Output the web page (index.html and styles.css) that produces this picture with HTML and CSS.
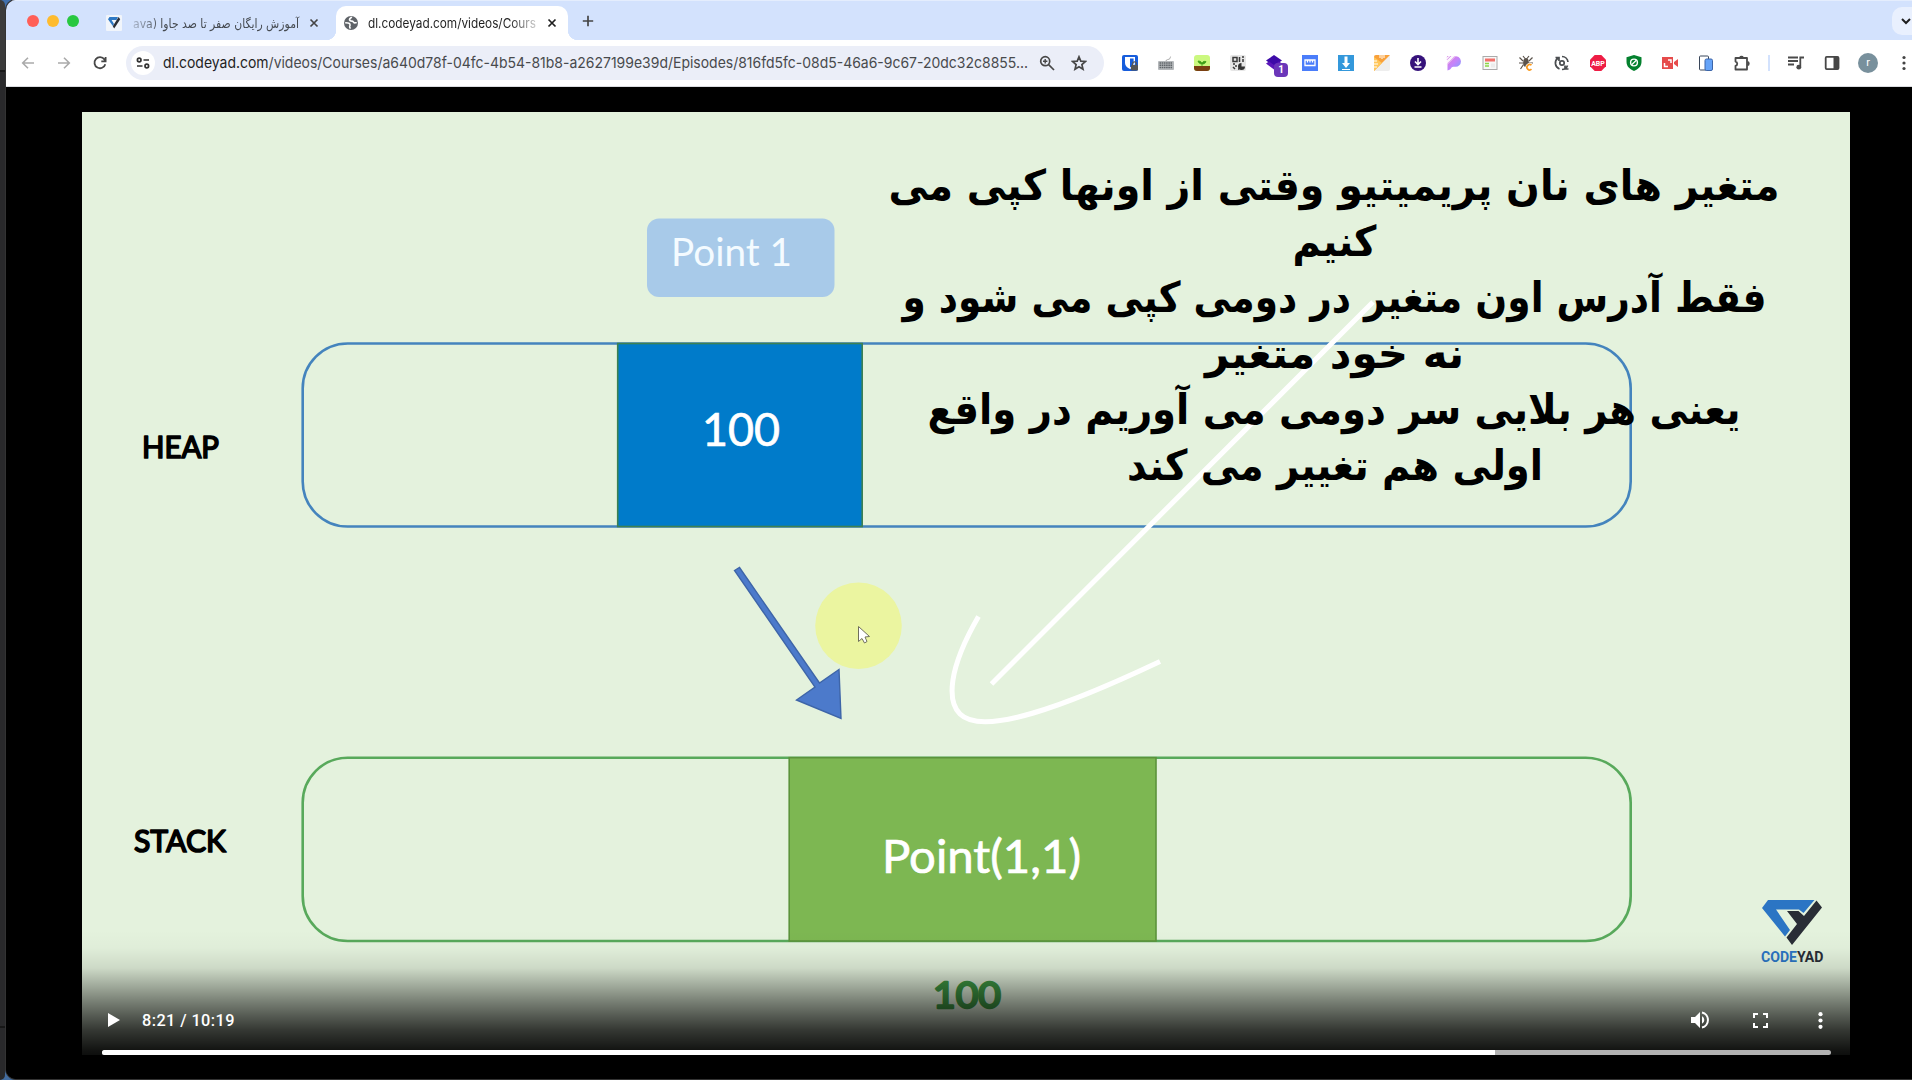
FILE: index.html
```html
<!DOCTYPE html>
<html lang="en">
<head>
<meta charset="utf-8">
<title>dl.codeyad.com</title>
<link rel="stylesheet" href="styles.css">
</head>
<body>
<div class="desktop">
  <div class="behind"></div>
  <div class="window">
    <header class="tabstrip">
      <div class="lights"><i class="red"></i><i class="yellow"></i><i class="green"></i></div>
      <div class="tab">
        <svg class="favicon" width="16" height="16" viewBox="0 0 16 16"><rect width="16" height="16" rx="1" fill="#f1f5fb"/><path d="M2 4.2 3.5 2H12L10.5 5H5.6L8 9 6.8 11Z" fill="#2d78c4"/><path d="M12.6 2 14.2 4.2 8.2 13.5 6.8 11.3Z" fill="#292d36"/></svg>
        <svg class="tab-title fade-left" width="168" height="24"><text class="fa" direction="rtl" x="167" y="16.500" textLength="166" lengthAdjust="spacingAndGlyphs">آموزش رایگان صفر تا صد جاوا (ava</text></svg>
        <svg class="close" width="10" height="10" viewBox="0 0 10 10"><path d="M1.5 1.5l7 7M8.5 1.5l-7 7"/></svg>
      </div>
      <div class="tab active">
        <svg class="globe" width="16" height="16" viewBox="0 0 16 16"><circle cx="8" cy="8" r="7" fill="#5f6368"/><path d="M8.6 1.8c-.4 1.4-1.9 1.5-2.1 2.6-.2 1.4 1.3 1.6 2.6 1.7 1.7.2 1.2 1.8 2.6 1.800.800 0 1.400-.2 2-.1M2.200 7.800c2 .1 4.400.1 4.800 1.500.4 1.100-.4 1.600-.3 2.600.1.700.5 1.100.6 1.800" fill="none" stroke="#fff" stroke-width="1.600"/></svg>
        <svg class="tab-title fade-right" width="170" height="24"><text x="1" y="16.500" textLength="168" lengthAdjust="spacingAndGlyphs">dl.codeyad.com/videos/Cours</text></svg>
        <svg class="close" width="10" height="10" viewBox="0 0 10 10"><path d="M1.5 1.5l7 7M8.5 1.5l-7 7"/></svg>
      </div>
      <svg class="plus" width="12" height="12" viewBox="0 0 12 12"><path d="M6 .8v10.4M.8 6h10.4"/></svg>
      <div class="tab-search"><svg width="10" height="8" viewBox="0 0 10 8"><path d="M1 2l4 4 4-4"/></svg></div>
    </header>
    <div class="toolbar">
      <div class="nav">
        <svg width="16" height="16" viewBox="0 0 16 16" class="dim"><path d="M14 8H3M8 2.7L2.7 8 8 13.3"/></svg>
        <svg width="16" height="16" viewBox="0 0 16 16" class="dim"><path d="M2 8h11M8 2.7L13.3 8 8 13.3"/></svg>
        <svg width="16" height="16" viewBox="0 0 16 16"><path d="M13.3 9.2A5.5 5.5 0 1 1 12.4 4.4L13.4 6M13.6 2v4.3H9.3"/></svg>
      </div>
      <div class="omnibox">
        <span class="site"><svg width="14" height="14" viewBox="0 0 14 14"><circle cx="3.2" cy="4" r="1.8"/><path d="M7.5 4H13M1 10h5.5"/><circle cx="10.8" cy="10" r="1.8"/></svg></span>
        <svg class="url" width="868" height="26"><text x="0" y="18" textLength="865" lengthAdjust="spacingAndGlyphs"><tspan class="host">dl.codeyad.com</tspan>/videos/Courses/a640d78f-04fc-4b54-81b8-a2627199e39d/Episodes/816fd5fc-08d5-46a6-9c67-20dc32c8855...</text></svg>
        <svg class="mag" width="16" height="16" viewBox="0 0 16 16"><circle cx="6.2" cy="6.2" r="4.5"/><path d="M9.6 9.6L15 15"/><path d="M6.2 4v4.4M4 6.2h4.4" stroke-width="1.4"/></svg>
        <svg class="star" width="16" height="16" viewBox="0 0 16 16"><path d="M8 1.8l1.8 4.3 4.7.4-3.6 3.1 1.1 4.6L8 11.7l-4 2.5 1.1-4.6L1.5 6.500l4.700-.4z"/></svg>
      </div>
      <div class="extensions">
        <svg viewBox="0 0 16 16"><rect width="16" height="16" rx="2" fill="#175ddc"/><path d="M3 2h10v6c0 3-2.500 4.800-5 6-2.500-1.200-5-3-5-6z" fill="#fff"/><path d="M8 3.500h3.600V8c0 2-1.600 3.400-3.600 4.400z" fill="#175ddc"/><rect x="9" y="10" width="7" height="5.500" rx=".8" fill="#555"/><path d="M10.500 10V8.800a2 2 0 0 1 4 0V10" fill="none" stroke="#555" stroke-width="1.200"/></svg>
        <svg viewBox="0 0 16 16"><path d="M8 6c0-2 3-1 4-2.500C12.500 2.500 12 2 13 1.500" fill="none" stroke="#aaa"/><rect y="6" width="16" height="9" rx="1" fill="#b5b8bb"/><path d="M1.500 8h13M1.500 10.200h13M1.500 12.600h13" stroke="#60656a" stroke-width="1.500" stroke-dasharray="1.600 .6"/></svg>
        <svg viewBox="0 0 16 16"><rect width="16" height="16" rx="3" fill="#cbf87f"/><path d="M0 11h16v2a3 3 0 0 1-3 3H3a3 3 0 0 1-3-3z" fill="#7a3f12"/><path d="M8 11V8.500M8 9C6 9 4.500 8 4 6c2.500 0 4 1 4 3 0-2 1.500-3 4-2.500-.5 2-2 2.500-4 2.500" fill="#3d9d16" stroke="#3d9d16" stroke-width=".8"/></svg>
        <svg viewBox="0 0 16 16"><rect width="16" height="16" rx="2" fill="#e6e6e6"/><path d="M3 2.500h4v4H3zM9.500 2v5M12 2h2M13 4v3M3 9h2M6 10v2M3 12l2 2M8 14h1" fill="none" stroke="#383838" stroke-width="1.500"/><path d="M11.500 8v3.500H15A3.500 3.500 0 1 1 11.500 8" fill="#333"/></svg>
        <span class="ext-badge"><svg viewBox="0 0 16 16"><path d="M8 0l8 5.500-8 5.500L0 5.500z" fill="#3d0ba8"/><path d="M0 8.500L3 6.500 8 10l5-3.500 3 2-8 6z" fill="#5a17ba"/></svg><b>1</b></span>
        <svg viewBox="0 0 16 16"><rect width="16" height="16" fill="#4a7dfa"/><path d="M3 5h10v5.500H3zM5.500 5v2.500M8 5v2.500M10.500 5v2.500" fill="none" stroke="#fff" stroke-width="1.300"/></svg>
        <svg viewBox="0 0 16 16"><rect width="16" height="16" fill="#3498db"/><path d="M6.500 1.500h3V8H12l-4 5-4-5h2.500zM4 14h8v1H4z" fill="#fff"/></svg>
        <svg viewBox="0 0 16 16"><rect width="16" height="16" rx="2" fill="#eee"/><path d="M0 2a2 2 0 0 1 2-2h14L0 16z" fill="#f9a13a"/><path d="M0 2l8 6-8 8z" fill="#ffc75b"/><path d="M6 0v3M8 0v4M10 0v3M0 6h3M0 9h4M0 12h3" stroke="#fff"/></svg>
        <svg viewBox="0 0 16 16"><circle cx="8" cy="8" r="8" fill="#36127b"/><path d="M8 3v6M5 6.500L8 9.500l3-3M4.500 12h7" fill="none" stroke="#fff" stroke-width="1.600"/></svg>
        <svg viewBox="0 0 16 16"><defs><linearGradient id="pg" x2="1" y2="1"><stop stop-color="#e57bd5"/><stop offset=".5" stop-color="#c284fb"/><stop offset="1" stop-color="#73a4fb"/></linearGradient></defs><path d="M1.500 8L8 1.500a5.300 5.300 0 1 1 1 10.300H7.500c-2 0-2 1.200-3.500 2.700L1.500 15.500z" fill="url(#pg)"/><path d="M1 3.500L3.500 1M1 6.500L6.500 1M1 9.500L9 1.500" stroke="#f3e4fa" stroke-width=".8"/><path d="M1 4.800L4.800 1M1 2.200L2.200 1" stroke="#d78ae8"/></svg>
        <svg viewBox="0 0 16 16"><rect x="1" y="1.500" width="14" height="13" fill="#f8f8f8" stroke="#aaa"/><path d="M3 3.500h10v3H3z" fill="#f2716a"/><path d="M3 8.500h4M3 11h4" stroke="#8bd646" stroke-width="1.400"/><path d="M9 8.500h4v4H9z" fill="#ececec"/></svg>
        <svg viewBox="0 0 16 16"><path d="M5 1l2 2.500M11 1L9 3.500M1.500 2.500L5 6M14.500 2.500L11 6M1 8h14M2.500 14l3-4.500" fill="none" stroke="#5b534c" stroke-width="1.200"/><ellipse cx="8" cy="7.500" rx="2.800" ry="4.500" fill="#5b534c"/><path d="M13.500 10.200a2.700 2.700 0 1 0 0 4" fill="none" stroke="#fff" stroke-width="3"/><path d="M13.500 10.200a2.700 2.700 0 1 0 0 4" fill="none" stroke="#fa9b20" stroke-width="1.700"/></svg>
        <svg viewBox="0 0 16 16" fill="none" stroke="#4a4d50" stroke-width="1.700"><path d="M5.500 14A6.300 6.300 0 0 1 4 3M1.500 2.500h3.500v3.500M8 1.500A6.300 6.300 0 0 1 14 7M8 14.500a6 6 0 0 0 5.500-4M14.500 14H11v-3.500"/><circle cx="8" cy="8" r="2.200"/></svg>
        <svg viewBox="0 0 16 16"><path d="M4.700 0h6.600L16 4.700v6.600L11.300 16H4.700L0 11.300V4.700z" fill="#ee1d45"/><text class="abp" x="1.200" y="10.500" textLength="13.600" lengthAdjust="spacingAndGlyphs">ABP</text></svg>
        <svg viewBox="0 0 16 16"><path d="M8 0l7.500 2.300V7c0 4.500-3.500 7.300-7.500 9C4 14.300.5 11.500.5 7V2.300z" fill="#04812e"/><circle cx="8" cy="7.500" r="3.400" fill="none" stroke="#fff" stroke-width="1.400"/><path d="M10.300 5.200L5.700 9.800" stroke="#fff" stroke-width="1.300"/></svg>
        <svg viewBox="0 0 16 16"><path d="M0 2h11v12H0zM12 7l4-3v8l-4-3z" fill="#e64b4b"/><path d="M2.500 8v3.500H6M6 5h3v3" fill="none" stroke="#fff" stroke-width="1.500"/></svg>
        <svg viewBox="0 0 16 16"><rect x="1.500" y="1" width="9" height="14" rx="1" fill="#fff" stroke="#39465a"/><rect x="7" y="4" width="7.500" height="11.500" rx="1.500" fill="#65a3f8" stroke="#3c65a8"/></svg>
        <svg viewBox="0 0 16 16" fill="none" stroke="#4a4a4a" stroke-width="1.800" stroke-linejoin="round"><path d="M1.500 3H13v11.500H1.500v-3.600a2.200 2.200 0 0 0 0-4.300z"/><path d="M6 2.500a1.600 1.400 0 0 1 3 0M13.500 7a1.300 1.600 0 0 1 0 3.200" fill="#4a4a4a"/></svg>
      </div>
      <div class="end">
        <i class="divider"></i>
        <svg class="queue" viewBox="0 0 16 16"><path d="M0 2.500h10M0 6h10M0 9.500h6M12.300 12V2.500H16" fill="none" stroke="#4a4a4a" stroke-width="1.800"/><circle cx="10.800" cy="12.200" r="2.400" fill="#4a4a4a"/></svg>
        <svg class="panel" viewBox="0 0 16 16"><rect x="1.700" y="1.900" width="12.800" height="12.200" rx="1" fill="none" stroke="#474747" stroke-width="1.800"/><path d="M9.500 2h5v12h-5z" fill="#474747"/></svg>
        <span class="avatar">r</span>
        <svg class="menu" viewBox="0 0 4 16"><circle cx="2" cy="2.500" r="1.600"/><circle cx="2" cy="8" r="1.600"/><circle cx="2" cy="13.500" r="1.600"/></svg>
      </div>
    </div>
    <main class="stage">
      <div class="video">
        <svg class="slide" width="1768" height="943" viewBox="82 112 1768 943">
          <rect x="82" y="112" width="1768" height="943" fill="#e4f2dd"/>
          <rect x="647" y="218.500" width="187.500" height="78.500" rx="12" fill="#a8cae9"/>
          <text class="calibri thin" x="671" y="266" font-size="38" textLength="121" lengthAdjust="spacingAndGlyphs">Point 1</text>
          <rect x="302.700" y="343.500" width="1328" height="183" rx="45" fill="none" stroke="#4484bd" stroke-width="2.600"/>
          <rect x="617.700" y="343.500" width="244.500" height="183" fill="#007bca" stroke="#3c8152" stroke-width="1.600"/>
          <text class="calibri" x="702" y="446" font-size="46" textLength="78" lengthAdjust="spacingAndGlyphs">100</text>
          <text class="hand" x="142" y="458" font-size="31" textLength="77" lengthAdjust="spacingAndGlyphs">HEAP</text>
          <text class="hand" x="134" y="852" font-size="31" textLength="92" lengthAdjust="spacingAndGlyphs">STACK</text>
          <rect x="302.700" y="757.700" width="1328" height="183.300" rx="45" fill="none" stroke="#58a95b" stroke-width="2.600"/>
          <rect x="789.200" y="757.700" width="366.800" height="183.300" fill="#7db752" stroke="#5c933b" stroke-width="1.600"/>
          <text class="calibri" x="882" y="873.300" font-size="46.500" textLength="199" lengthAdjust="spacingAndGlyphs">Point(1,1)</text>
          <text class="hand result" x="933" y="1008" font-size="37" textLength="68" lengthAdjust="spacingAndGlyphs">100</text>
          <path d="M1373 302L991.500 684M978.500 616.500C948 669 947 701 960 714C983 737 1066 706 1160 661.500" fill="none" stroke="#fff" stroke-width="5"/>
          <g class="caption" direction="rtl" text-anchor="middle" font-size="42">
            <text x="1334" y="200" textLength="891" lengthAdjust="spacingAndGlyphs">متغیر های نان پریمیتیو وقتی از اونها کپی می</text>
            <text x="1334.500" y="256" textLength="84" lengthAdjust="spacingAndGlyphs">کنیم</text>
            <text x="1334.500" y="312" textLength="864" lengthAdjust="spacingAndGlyphs">فقط آدرس اون متغیر در دومی کپی می شود و</text>
            <text x="1334.500" y="368" textLength="259" lengthAdjust="spacingAndGlyphs">نه خود متغیر</text>
            <text x="1334" y="424" textLength="813" lengthAdjust="spacingAndGlyphs">یعنی هر بلایی سر دومی می آوریم در واقع</text>
            <text x="1335" y="480" textLength="416" lengthAdjust="spacingAndGlyphs">اولی هم تغییر می کند</text>
          </g>
          <path d="M734.500 570.500L739.500 567.500L819.500 683L839 669.500L841 718.500L796.500 700L815 687Z" fill="#4c7acb" stroke="#3e65a8" stroke-width="1.400"/>
          <circle cx="858.500" cy="625.700" r="43.300" fill="#ebf5a0"/>
          <path d="M858.500 626.500V641.500L862 638.500L864.500 643L867 641.500L865 637L869.500 636.500Z" fill="#fff" stroke="#6f6f5c"/>
          <path d="M1762 908L1768 900H1814.500L1803.500 913L1799 909.500H1776L1790 930L1785 936.500Z" fill="#2b75c4"/>
          <path d="M1816.500 900.500L1822 907.500L1792 945L1786.500 937.500L1797 924L1787 911H1798.500L1804 916Z" fill="#292d36"/>
          <text class="brand" x="1761" y="962" font-size="14" textLength="62.500" lengthAdjust="spacingAndGlyphs"><tspan fill="#2b75c4">CODE</tspan>YAD</text>
        </svg>
        <div class="controls">
          <div class="row">
            <svg class="play" width="12" height="14" viewBox="0 0 12 14"><path d="M0 0l12 7-12 7z"/></svg>
            <span class="time">8:21 / 10:19</span>
            <svg class="vol" width="20" height="18" viewBox="0 0 20 18"><path d="M1 6v6h4l5 5V1L5 6z"/><path d="M12 5.300a4.100 4.100 0 0 1 0 7.400z"/><path d="M12 1.500a7.700 7.700 0 0 1 0 15" fill="none" stroke="#fff" stroke-width="2"/></svg>
            <svg class="full" width="15" height="15" viewBox="0 0 15 15"><path d="M1 5V1h4M10 1h4v4M14 10v4h-4M5 14H1v-4" fill="none" stroke="#fff" stroke-width="2"/></svg>
            <svg class="more" width="5" height="17" viewBox="0 0 5 17"><circle cx="2.500" cy="2.200" r="2.100"/><circle cx="2.500" cy="8.500" r="2.100"/><circle cx="2.500" cy="14.800" r="2.100"/></svg>
          </div>
          <div class="progress"><i></i></div>
        </div>
      </div>
    </main>
  </div>
</div>
</body>
</html>
```
FILE: styles.css
```css
* { box-sizing: border-box; }
body { margin: 0; background: #355d98; font-family: Roboto, "Noto Sans", sans-serif; overflow: hidden; }
svg { display: block; flex: none; }
.desktop { display: flex; width: 1912px; height: 1080px; background: linear-gradient(#4070ad, #426c9f); }
.behind { width: 5px; margin-right: 1px; height: 1080px; border-radius: 0 8px 8px 0; background: linear-gradient(#3b3b3b 0 70px, #171717 70px 72px, #29292b 72px 1026px, #171717 1026px 1028px, #29292b 1028px); }
.window { width: 1906px; height: 1079px; display: flex; flex-direction: column; border-radius: 10px 0 0 10px; overflow: hidden; background: #000; box-shadow: 0 0 0 1px #333; }
.tabstrip { height: 40px; flex: none; display: flex; align-items: center; background: #d3e2fd; border-top: 1px solid #e4edfd; padding-left: 21px; }
.lights { display: flex; gap: 8px; width: 79px; }
.lights i { width: 12px; height: 12px; border-radius: 50%; }
.red { background: #ff5f57; }
.yellow { background: #febb2e; }
.green { background: #28c840; }
.tab { display: flex; align-items: center; width: 230px; height: 34px; margin-top: 5px; }
.tab-title { font: 13px Inter, sans-serif; fill: #454a50; }
.fade-left { margin: 0 9px 0 10px; -webkit-mask-image: linear-gradient(90deg, #0004, #000 30px); }
.fade-left .fa { font: 12.5px "DejaVu Sans", sans-serif; }
.fade-right { margin: 0 9px 0 8px; fill: #1f1f1f; -webkit-mask-image: linear-gradient(270deg, #0003, #000 28px); }
.close { fill: none; stroke: #454545; stroke-width: 1.7; }
.active { position: relative; width: 232px; padding-left: 7px; background: #fff; border-radius: 10px 10px 0 0; }
.active::before, .active::after { content: ""; position: absolute; bottom: 0; width: 10px; height: 10px; }
.active::before { left: -10px; background: radial-gradient(circle at 0 0, transparent 10px, #fff 10.5px); }
.active::after { right: -10px; background: radial-gradient(circle at 100% 0, transparent 10px, #fff 10.5px); }
.active .close { stroke: #1f1f1f; margin-left: 1px; }
.plus { margin-left: 14px; fill: none; stroke: #454545; stroke-width: 1.7; }
.tab-search { margin-left: auto; width: 20px; height: 28px; border-radius: 10px 0 0 10px; background: #e9f0fe; display: flex; align-items: center; padding-left: 9px; }
.tab-search path { fill: none; stroke: #1f1f1f; stroke-width: 2; }
.toolbar { height: 47px; flex: none; display: flex; align-items: center; background: #fff; border-bottom: 1px solid #dadce0; }
.nav { display: flex; gap: 20px; width: 120px; padding-left: 14px; fill: none; stroke: #474747; stroke-width: 1.8; }
.nav .dim { stroke: #aaa; stroke-width: 1.6; }
.omnibox { display: flex; align-items: center; width: 978px; height: 34px; border-radius: 17px; background: #ebeef8; padding-left: 5px; }
.site { width: 24px; height: 24px; border-radius: 50%; background: #fff; display: grid; place-items: center; margin-right: 8px; }
.site svg { fill: none; stroke: #333; stroke-width: 1.7; }
.url { font: 15px Inter, sans-serif; fill: #484a4d; }
.host { fill: #1f1f1f; }
.mag, .star { fill: none; stroke: #474747; stroke-width: 1.7; margin-left: 8px; }
.star { margin-left: 16px; }
.extensions { display: flex; gap: 20px; margin-left: 18px; }
.extensions svg { width: 16px; height: 16px; }
.ext-badge { position: relative; width: 16px; height: 16px; }
.ext-badge b { position: absolute; left: 8px; top: 8px; width: 14px; height: 14px; border-radius: 4px; background: #6b36b9; color: #fff; font: bold 10px/14px Roboto; text-align: center; }
.abp { font: bold 7px Roboto; fill: #fff; }
.end { display: flex; align-items: center; }
.end svg { height: 16px; }
.divider { width: 2px; height: 16px; background: #d3e2fd; margin-left: 18px; }
.queue { width: 16px; margin-left: 18px; }
.panel { width: 16px; margin-left: 20px; }
.avatar { width: 20px; height: 20px; border-radius: 50%; background: #78909c; color: #fff; font: 11px/20px Roboto; text-align: center; margin-left: 18px; }
.menu { width: 4px; margin-left: 24px; fill: #444; }
.stage { flex: 1; background: #000; padding: 25px 0 0 76px; }
.video { position: relative; width: 1768px; height: 943px; }
.calibri { font-family: Lato, sans-serif; fill: #fff; stroke: #fff; stroke-width: .7; }
.calibri.thin { fill: #f4fbff; stroke: none; }
.hand { font-family: Lato, sans-serif; fill: #000; stroke: #000; stroke-width: 1.7; stroke-linejoin: round; }
.hand.result { fill: #3f9944; stroke: #3f9944; stroke-width: 2.4; }
.caption { font-family: "DejaVu Sans", sans-serif; font-weight: 700; fill: #000; }
.brand { font-family: Roboto, sans-serif; font-weight: 700; fill: #292d36; }
.controls { position: absolute; inset: auto 0 0 0; height: 125px; display: flex; flex-direction: column; justify-content: flex-end; background: linear-gradient(transparent 0, #00000005 18px, #0000001a 38px, #00000052 58px, #0000007a 72px, #000000a0 86px, #000000c4 100px, #000000ea 120px, #000000f0); }
.row { display: flex; align-items: center; height: 40px; margin-bottom: 10px; padding-left: 26px; fill: #fff; }
.time { margin-left: 22px; width: 1549px; color: #fff; font: 500 16.3px Roboto, sans-serif; letter-spacing: .42px; }
.full { margin-left: 43px; }
.more { margin-left: 50px; }
.vol { margin-left: -1px; }
.progress { height: 5px; margin: 0 19px 0 20px; border-radius: 2.5px; background: #b2b2b2; overflow: hidden; }
.progress i { display: block; width: 1393px; height: 5px; background: #fff; }
```
